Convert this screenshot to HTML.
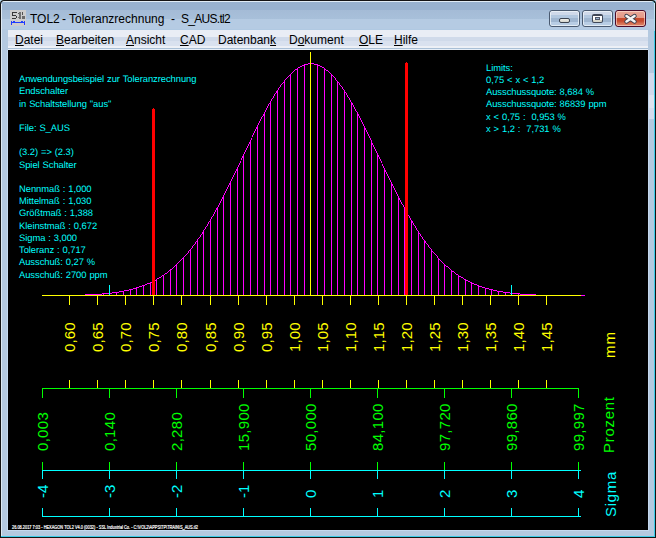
<!DOCTYPE html>
<html><head><meta charset="utf-8"><style>
html,body{margin:0;padding:0;width:656px;height:538px;overflow:hidden;background:#b8dcef}
body{position:relative;font-family:"Liberation Sans",sans-serif}
#outer{position:absolute;left:0;top:0;width:656px;height:538px;background:#141414;border-radius:4px 4px 0 0}
#frame{position:absolute;left:1px;top:1px;width:653px;height:535px;background:#b4c9e0;border-right:1px solid #3ccbe8;border-bottom:1px solid #3ccbe8;border-radius:4px 4px 0 0}
#title{position:absolute;left:1px;top:1px;width:653px;height:29px;
 background:linear-gradient(#e0ecf5 0,#e0ecf5 1px,#98b2cf 1px,#98b2cf 9px,#a4bbd6 9px,#a8c0da 18px,#b5cbe3 18px,#b5cbe3 28px,#b0c9e2 28px);
 border-radius:4px 4px 0 0}
#lhl{position:absolute;left:1px;top:4px;width:1px;height:532px;background:#dde9f4}
#rrefl{position:absolute;left:648px;top:73px;width:6px;height:46px;background:linear-gradient(#d0d9ec 0,#d0d9ec 22px,#dde3f0 22px,#dde3f0 35px,#d3dbed 35px)}
.tt{position:absolute;top:12px;font-size:12px;line-height:14px;color:#000;white-space:pre}
#menu{position:absolute;left:8px;top:30px;width:640px;height:20px;
 background:linear-gradient(#e9edf5 0,#e9edf5 7px,#d0daea 7px,#d0daea 11px,#d9e1ef 11px,#d9e1ef 16px,#edf0f6 16px,#edf0f6 18px,#a9bfd6 18px,#a9bfd6 19px,#e6eef8 19px)}
.mi{position:absolute;top:3px;font-size:12px;line-height:14px;color:#000;white-space:pre}
.mi u{text-decoration:underline;text-underline-offset:1px}
#cborder{position:absolute;left:7px;top:50px;width:642px;height:481px;background:#c4d8ee}
#canvas{position:absolute;left:8px;top:50px;width:640px;height:480px;background:#000;overflow:hidden}
.r{position:absolute;white-space:nowrap;transform-origin:0 0;transform:rotate(-90deg);line-height:15px;height:15px}
.t{position:absolute;white-space:pre;color:#00ffff;font-size:9.4px;line-height:12px;letter-spacing:-0.05px;word-spacing:0.4px;text-rendering:geometricPrecision}
.ft{position:absolute;left:4px;top:474px;font-size:5px;line-height:6px;color:#ffffff;-webkit-text-stroke:0.2px #fff;white-space:pre;transform-origin:0 0;transform:scaleX(0.78)}
.btn{position:absolute;top:10px;height:17px;width:31px;box-sizing:border-box;border:1px solid #4a5a70;border-radius:3px;overflow:hidden}
.btn i{position:absolute;left:0;top:0;right:0;bottom:0;border:1px solid rgba(240,245,250,.75);border-radius:2px}
</style></head><body>
<div id="outer"></div>
<div id="frame"></div>
<div id="title"></div>
<div id="lhl"></div>
<div id="rrefl"></div>
<div style="position:absolute;left:654px;top:3px;width:1px;height:28px;background:linear-gradient(#c8e8f6,#9cd8f0)"></div>
<svg width="16" height="16" viewBox="0 0 16 16" style="position:absolute;left:10px;top:10px" shape-rendering="crispEdges">
<rect width="16" height="16" fill="#cdcdcd"/>
<path d="M2 2h5v1h-4v2h3v1h-4zM6 6h1v2h-1zM2 8h4v1h-4z" fill="#383838"/>
<rect x="7.5" y="3" width="1" height="1" fill="#555"/><rect x="7.5" y="7" width="1" height="1" fill="#777"/>
<rect x="9" y="2" width="2" height="7" fill="#707070"/><rect x="12" y="2" width="1" height="3" fill="#505050"/><rect x="12" y="6" width="3" height="3" fill="#6a6a6a"/>
<rect x="1" y="11" width="1" height="4" fill="#1f3cff"/><rect x="14" y="11" width="1" height="4" fill="#1f3cff"/>
<rect x="1" y="12" width="14" height="1" fill="#1f3cff"/>
<rect x="3" y="11" width="2" height="2" fill="#1f3cff"/><rect x="11" y="11" width="2" height="2" fill="#1f3cff"/>
</svg>
<div class="tt" style="left:30px">TOL2</div><div class="tt" style="left:62px">-</div><div class="tt" style="left:69px">Toleranzrechnung</div><div class="tt" style="left:171px">-</div><div class="tt" style="left:181px;letter-spacing:-0.7px">S_AUS.tl2</div>
<div class="btn" style="left:549px;background:linear-gradient(#cfd9e9 0,#cfd9e9 4px,#b3c8df 4px,#b3c8df 7px,#9fb6d0 7px,#9fb6d0 11px,#b8cde4 11px)"><i></i>
 <div style="position:absolute;left:9px;top:7px;width:11px;height:5px;box-sizing:border-box;border:1px solid #3c4450;border-radius:2px;background:linear-gradient(#f0f0ea,#d4d4cc)"></div></div>
<div class="btn" style="left:582px;background:linear-gradient(#cfd9e9 0,#cfd9e9 4px,#b3c8df 4px,#b3c8df 7px,#9fb6d0 7px,#9fb6d0 11px,#b8cde4 11px)"><i></i>
 <div style="position:absolute;left:9px;top:3px;width:11px;height:9px;box-sizing:border-box;border:1px solid #404858;border-top-width:2px;border-radius:2px;background:linear-gradient(#fff 65%,#d8d8cc 65%)"></div>
 <div style="position:absolute;left:12px;top:6px;width:5px;height:3px;box-sizing:border-box;border:1px solid #50586a;background:#9ab4d0"></div></div>
<div class="btn" style="left:615px;border-color:#4a0a28;background:linear-gradient(#eaa898 0,#e49886 7px,#c84a2c 7px,#c54a2e 10px,#d9795c 13px)"><i style="border-color:rgba(255,230,220,.6)"></i>
 <svg width="31" height="17" viewBox="0 0 31 17" style="position:absolute;left:-1px;top:-1px">
 <path d="M11.5 6 L19.5 11.5 M19.5 6 L11.5 11.5" stroke="#3a3f4e" stroke-width="4.4" stroke-linecap="round"/>
 <path d="M11.5 6 L19.5 11.5 M19.5 6 L11.5 11.5" stroke="#f4f4f4" stroke-width="2.6" stroke-linecap="round"/>
 </svg></div>
<div id="menu">
<div class="mi" style="left:7px"><u>D</u>atei</div>
<div class="mi" style="left:48px"><u>B</u>earbeiten</div>
<div class="mi" style="left:118px"><u>A</u>nsicht</div>
<div class="mi" style="left:172px"><u>C</u>AD</div>
<div class="mi" style="left:210px">Datenban<u>k</u></div>
<div class="mi" style="left:281px">D<u>o</u>kument</div>
<div class="mi" style="left:351px"><u>O</u>LE</div>
<div class="mi" style="left:386px"><u>H</u>ilfe</div>
</div>
<div id="cborder"></div>
<div id="canvas">
<svg width="640" height="480" viewBox="8 50 640 480" style="position:absolute;left:0;top:0" shape-rendering="crispEdges"><path d="M42 295h1v1h-1zM43 295h1v1h-1zM44 295h1v1h-1zM45 295h1v1h-1zM46 295h1v1h-1zM47 295h1v1h-1zM48 295h1v1h-1zM49 295h1v1h-1zM50 295h1v1h-1zM51 295h1v1h-1zM52 295h1v1h-1zM53 295h1v1h-1zM54 295h1v1h-1zM55 295h1v1h-1zM56 295h1v1h-1zM57 295h1v1h-1zM58 295h1v1h-1zM59 295h1v1h-1zM60 295h1v1h-1zM61 295h1v1h-1zM62 295h1v1h-1zM63 295h1v1h-1zM64 295h1v1h-1zM65 295h1v1h-1zM66 295h1v1h-1zM67 295h1v1h-1zM68 295h1v1h-1zM69 295h1v1h-1zM70 295h1v1h-1zM71 295h1v1h-1zM72 295h1v1h-1zM73 295h1v1h-1zM74 295h1v1h-1zM75 295h1v1h-1zM76 295h1v1h-1zM77 295h1v1h-1zM78 295h1v1h-1zM79 295h1v1h-1zM80 295h1v1h-1zM81 295h1v1h-1zM82 295h1v1h-1zM83 295h1v1h-1zM84 295h1v1h-1zM85 294h1v1h-1zM86 294h1v1h-1zM87 294h1v1h-1zM88 294h1v1h-1zM89 294h1v1h-1zM90 294h1v1h-1zM91 294h1v1h-1zM92 294h1v1h-1zM93 294h1v1h-1zM94 294h1v1h-1zM95 294h1v1h-1zM96 294h1v1h-1zM97 294h1v1h-1zM98 294h1v1h-1zM99 294h1v1h-1zM100 294h1v1h-1zM101 294h1v1h-1zM102 293h1v1h-1zM103 293h1v1h-1zM104 293h1v1h-1zM105 293h1v1h-1zM106 293h1v1h-1zM107 293h1v1h-1zM108 293h1v1h-1zM109 293h1v1h-1zM110 293h1v1h-1zM111 293h1v1h-1zM112 292h1v1h-1zM113 292h1v1h-1zM114 292h1v1h-1zM115 292h1v1h-1zM116 292h1v1h-1zM117 292h1v1h-1zM118 292h1v1h-1zM119 291h1v1h-1zM120 291h1v1h-1zM121 291h1v1h-1zM122 291h1v1h-1zM123 291h1v1h-1zM124 290h1v1h-1zM125 290h1v1h-1zM126 290h1v1h-1zM127 290h1v1h-1zM128 290h1v1h-1zM129 289h1v1h-1zM130 289h1v1h-1zM131 289h1v1h-1zM132 289h1v1h-1zM133 288h1v1h-1zM134 288h1v1h-1zM135 288h1v1h-1zM136 287h1v1h-1zM137 287h1v1h-1zM138 287h1v1h-1zM139 286h1v1h-1zM140 286h1v1h-1zM141 286h1v1h-1zM142 285h1v1h-1zM143 285h1v1h-1zM144 285h1v1h-1zM145 284h1v1h-1zM146 284h1v1h-1zM147 283h1v1h-1zM148 283h1v1h-1zM149 283h1v1h-1zM150 282h1v1h-1zM151 282h1v1h-1zM152 281h1v1h-1zM153 281h1v1h-1zM154 280h1v1h-1zM155 280h1v1h-1zM156 279h1v1h-1zM157 278h1v1h-1zM158 278h1v1h-1zM159 277h1v1h-1zM160 277h1v1h-1zM161 276h1v1h-1zM162 275h1v1h-1zM163 275h1v1h-1zM164 274h1v1h-1zM165 273h1v1h-1zM166 273h1v1h-1zM167 272h1v1h-1zM168 271h1v1h-1zM169 270h1v1h-1zM170 269h1v1h-1zM171 269h1v1h-1zM172 268h1v1h-1zM173 267h1v1h-1zM174 266h1v1h-1zM175 265h1v1h-1zM176 264h1v1h-1zM177 263h1v1h-1zM178 262h1v1h-1zM179 261h1v1h-1zM180 260h1v1h-1zM181 259h1v1h-1zM182 258h1v1h-1zM183 257h1v1h-1zM184 256h1v1h-1zM185 255h1v1h-1zM186 254h1v1h-1zM187 253h1v1h-1zM188 251h1v2h-1zM189 250h1v1h-1zM190 249h1v1h-1zM191 248h1v1h-1zM192 246h1v2h-1zM193 245h1v1h-1zM194 244h1v1h-1zM195 242h1v2h-1zM196 241h1v1h-1zM197 239h1v2h-1zM198 238h1v1h-1zM199 237h1v1h-1zM200 235h1v2h-1zM201 234h1v1h-1zM202 232h1v2h-1zM203 230h1v2h-1zM204 229h1v1h-1zM205 227h1v2h-1zM206 226h1v1h-1zM207 224h1v2h-1zM208 222h1v2h-1zM209 221h1v1h-1zM210 219h1v2h-1zM211 217h1v2h-1zM212 216h1v1h-1zM213 214h1v2h-1zM214 212h1v2h-1zM215 210h1v2h-1zM216 208h1v2h-1zM217 207h1v1h-1zM218 205h1v2h-1zM219 203h1v2h-1zM220 201h1v2h-1zM221 199h1v2h-1zM222 197h1v2h-1zM223 195h1v2h-1zM224 193h1v2h-1zM225 191h1v2h-1zM226 189h1v2h-1zM227 187h1v2h-1zM228 185h1v2h-1zM229 183h1v2h-1zM230 181h1v2h-1zM231 179h1v2h-1zM232 177h1v2h-1zM233 175h1v2h-1zM234 173h1v2h-1zM235 171h1v2h-1zM236 169h1v2h-1zM237 167h1v2h-1zM238 165h1v2h-1zM239 163h1v2h-1zM240 161h1v2h-1zM241 158h1v2h-1zM242 156h1v2h-1zM243 154h1v2h-1zM244 152h1v2h-1zM245 150h1v2h-1zM246 148h1v2h-1zM247 146h1v2h-1zM248 144h1v2h-1zM249 142h1v2h-1zM250 140h1v2h-1zM251 138h1v2h-1zM252 135h1v2h-1zM253 133h1v2h-1zM254 131h1v2h-1zM255 129h1v2h-1zM256 127h1v2h-1zM257 125h1v2h-1zM258 123h1v2h-1zM259 121h1v2h-1zM260 119h1v2h-1zM261 117h1v2h-1zM262 116h1v1h-1zM263 114h1v2h-1zM264 112h1v2h-1zM265 110h1v2h-1zM266 108h1v2h-1zM267 106h1v2h-1zM268 104h1v2h-1zM269 103h1v1h-1zM270 101h1v2h-1zM271 99h1v2h-1zM272 98h1v1h-1zM273 96h1v2h-1zM274 94h1v2h-1zM275 93h1v1h-1zM276 91h1v2h-1zM277 90h1v1h-1zM278 88h1v2h-1zM279 87h1v1h-1zM280 85h1v2h-1zM281 84h1v1h-1zM282 83h1v1h-1zM283 82h1v1h-1zM284 80h1v2h-1zM285 79h1v1h-1zM286 78h1v1h-1zM287 77h1v1h-1zM288 76h1v1h-1zM289 75h1v1h-1zM290 74h1v1h-1zM291 73h1v1h-1zM292 72h1v1h-1zM293 71h1v1h-1zM294 70h1v1h-1zM295 69h1v1h-1zM296 69h1v1h-1zM297 68h1v1h-1zM298 67h1v1h-1zM299 67h1v1h-1zM300 66h1v1h-1zM301 66h1v1h-1zM302 65h1v1h-1zM303 65h1v1h-1zM304 64h1v1h-1zM305 64h1v1h-1zM306 64h1v1h-1zM307 64h1v1h-1zM308 63h1v1h-1zM309 63h1v1h-1zM310 63h1v1h-1zM311 63h1v1h-1zM312 63h1v1h-1zM313 63h1v1h-1zM314 64h1v1h-1zM315 64h1v1h-1zM316 64h1v1h-1zM317 64h1v1h-1zM318 65h1v1h-1zM319 65h1v1h-1zM320 66h1v1h-1zM321 66h1v1h-1zM322 67h1v1h-1zM323 67h1v1h-1zM324 68h1v1h-1zM325 69h1v1h-1zM326 70h1v1h-1zM327 70h1v1h-1zM328 71h1v1h-1zM329 72h1v1h-1zM330 73h1v1h-1zM331 74h1v1h-1zM332 75h1v1h-1zM333 76h1v1h-1zM334 77h1v1h-1zM335 78h1v2h-1zM336 80h1v1h-1zM337 81h1v1h-1zM338 82h1v1h-1zM339 83h1v2h-1zM340 85h1v1h-1zM341 86h1v1h-1zM342 87h1v2h-1zM343 89h1v1h-1zM344 90h1v2h-1zM345 92h1v1h-1zM346 93h1v2h-1zM347 95h1v2h-1zM348 97h1v1h-1zM349 98h1v2h-1zM350 100h1v2h-1zM351 102h1v1h-1zM352 103h1v2h-1zM353 105h1v2h-1zM354 107h1v2h-1zM355 109h1v2h-1zM356 111h1v1h-1zM357 112h1v2h-1zM358 114h1v2h-1zM359 116h1v2h-1zM360 118h1v2h-1zM361 120h1v2h-1zM362 122h1v2h-1zM363 124h1v2h-1zM364 126h1v2h-1zM365 128h1v2h-1zM366 130h1v2h-1zM367 132h1v2h-1zM368 134h1v2h-1zM369 136h1v2h-1zM370 138h1v2h-1zM371 140h1v2h-1zM372 143h1v2h-1zM373 145h1v2h-1zM374 147h1v2h-1zM375 149h1v2h-1zM376 151h1v2h-1zM377 153h1v2h-1zM378 155h1v2h-1zM379 157h1v2h-1zM380 159h1v2h-1zM381 161h1v2h-1zM382 164h1v2h-1zM383 166h1v2h-1zM384 168h1v2h-1zM385 170h1v2h-1zM386 172h1v2h-1zM387 174h1v2h-1zM388 176h1v2h-1zM389 178h1v2h-1zM390 180h1v2h-1zM391 182h1v2h-1zM392 184h1v2h-1zM393 186h1v2h-1zM394 188h1v2h-1zM395 190h1v2h-1zM396 192h1v2h-1zM397 194h1v2h-1zM398 196h1v2h-1zM399 198h1v2h-1zM400 200h1v2h-1zM401 202h1v2h-1zM402 204h1v1h-1zM403 205h1v2h-1zM404 207h1v2h-1zM405 209h1v2h-1zM406 211h1v2h-1zM407 213h1v2h-1zM408 215h1v1h-1zM409 216h1v2h-1zM410 218h1v2h-1zM411 220h1v1h-1zM412 221h1v2h-1zM413 223h1v2h-1zM414 225h1v1h-1zM415 226h1v2h-1zM416 228h1v2h-1zM417 230h1v1h-1zM418 231h1v2h-1zM419 233h1v1h-1zM420 234h1v2h-1zM421 236h1v1h-1zM422 237h1v2h-1zM423 239h1v1h-1zM424 240h1v1h-1zM425 241h1v2h-1zM426 243h1v1h-1zM427 244h1v1h-1zM428 245h1v2h-1zM429 247h1v1h-1zM430 248h1v1h-1zM431 249h1v2h-1zM432 251h1v1h-1zM433 252h1v1h-1zM434 253h1v1h-1zM435 254h1v1h-1zM436 255h1v1h-1zM437 256h1v2h-1zM438 258h1v1h-1zM439 259h1v1h-1zM440 260h1v1h-1zM441 261h1v1h-1zM442 262h1v1h-1zM443 263h1v1h-1zM444 264h1v1h-1zM445 265h1v1h-1zM446 266h1v1h-1zM447 266h1v1h-1zM448 267h1v1h-1zM449 268h1v1h-1zM450 269h1v1h-1zM451 270h1v1h-1zM452 271h1v1h-1zM453 271h1v1h-1zM454 272h1v1h-1zM455 273h1v1h-1zM456 274h1v1h-1zM457 274h1v1h-1zM458 275h1v1h-1zM459 276h1v1h-1zM460 276h1v1h-1zM461 277h1v1h-1zM462 277h1v1h-1zM463 278h1v1h-1zM464 279h1v1h-1zM465 279h1v1h-1zM466 280h1v1h-1zM467 280h1v1h-1zM468 281h1v1h-1zM469 281h1v1h-1zM470 282h1v1h-1zM471 282h1v1h-1zM472 283h1v1h-1zM473 283h1v1h-1zM474 284h1v1h-1zM475 284h1v1h-1zM476 284h1v1h-1zM477 285h1v1h-1zM478 285h1v1h-1zM479 286h1v1h-1zM480 286h1v1h-1zM481 286h1v1h-1zM482 287h1v1h-1zM483 287h1v1h-1zM484 287h1v1h-1zM485 288h1v1h-1zM486 288h1v1h-1zM487 288h1v1h-1zM488 288h1v1h-1zM489 289h1v1h-1zM490 289h1v1h-1zM491 289h1v1h-1zM492 289h1v1h-1zM493 290h1v1h-1zM494 290h1v1h-1zM495 290h1v1h-1zM496 290h1v1h-1zM497 291h1v1h-1zM498 291h1v1h-1zM499 291h1v1h-1zM500 291h1v1h-1zM501 291h1v1h-1zM502 291h1v1h-1zM503 292h1v1h-1zM504 292h1v1h-1zM505 292h1v1h-1zM506 292h1v1h-1zM507 292h1v1h-1zM508 292h1v1h-1zM509 292h1v1h-1zM510 293h1v1h-1zM511 293h1v1h-1zM512 293h1v1h-1zM513 293h1v1h-1zM514 293h1v1h-1zM515 293h1v1h-1zM516 293h1v1h-1zM517 293h1v1h-1zM518 293h1v1h-1zM519 293h1v1h-1zM520 294h1v1h-1zM521 294h1v1h-1zM522 294h1v1h-1zM523 294h1v1h-1zM524 294h1v1h-1zM525 294h1v1h-1zM526 294h1v1h-1zM527 294h1v1h-1zM528 294h1v1h-1zM529 294h1v1h-1zM530 294h1v1h-1zM531 294h1v1h-1zM532 294h1v1h-1zM533 294h1v1h-1zM534 294h1v1h-1zM535 294h1v1h-1zM536 295h1v1h-1zM537 295h1v1h-1zM538 295h1v1h-1zM539 295h1v1h-1zM540 295h1v1h-1zM541 295h1v1h-1zM542 295h1v1h-1zM543 295h1v1h-1zM544 295h1v1h-1zM545 295h1v1h-1zM546 295h1v1h-1zM547 295h1v1h-1zM548 295h1v1h-1zM549 295h1v1h-1zM550 295h1v1h-1zM551 295h1v1h-1zM552 295h1v1h-1zM553 295h1v1h-1zM554 295h1v1h-1zM555 295h1v1h-1zM556 295h1v1h-1zM557 295h1v1h-1zM558 295h1v1h-1zM559 295h1v1h-1zM560 295h1v1h-1zM561 295h1v1h-1zM562 295h1v1h-1zM563 295h1v1h-1zM564 295h1v1h-1zM565 295h1v1h-1zM566 295h1v1h-1zM567 295h1v1h-1zM568 295h1v1h-1zM569 295h1v1h-1zM570 295h1v1h-1zM571 295h1v1h-1zM572 295h1v1h-1zM573 295h1v1h-1zM574 295h1v1h-1zM575 295h1v1h-1zM576 295h1v1h-1zM577 295h1v1h-1zM578 295h1v1h-1zM579 295h1v1h-1zM580 295h1v1h-1zM581 295h1v1h-1zM582 295h1v1h-1zM583 295h1v1h-1zM584 295h1v1h-1z" fill="#ff00ff"/><path d="M89 294h1v1h-1zM96 294h1v1h-1zM103 293h1v2h-1zM109 293h1v2h-1zM116 292h1v3h-1zM123 291h1v4h-1zM130 289h1v6h-1zM136 287h1v8h-1zM143 285h1v10h-1zM150 282h1v13h-1zM156 279h1v16h-1zM163 275h1v20h-1zM170 269h1v26h-1zM176 264h1v31h-1zM183 257h1v38h-1zM190 249h1v46h-1zM197 240h1v55h-1zM203 231h1v64h-1zM210 220h1v75h-1zM217 207h1v88h-1zM223 196h1v99h-1zM230 182h1v113h-1zM237 168h1v127h-1zM243 155h1v140h-1zM250 141h1v154h-1zM257 126h1v169h-1zM264 113h1v182h-1zM270 102h1v193h-1zM277 90h1v205h-1zM284 81h1v214h-1zM290 74h1v221h-1zM297 68h1v227h-1zM304 64h1v231h-1zM310 63h1v232h-1zM317 64h1v231h-1zM324 68h1v227h-1zM331 74h1v221h-1zM337 81h1v214h-1zM344 91h1v204h-1zM351 102h1v193h-1zM357 113h1v182h-1zM364 127h1v168h-1zM371 141h1v154h-1zM377 154h1v141h-1zM384 169h1v126h-1zM391 183h1v112h-1zM398 197h1v98h-1zM404 208h1v87h-1zM411 220h1v75h-1zM418 232h1v63h-1zM424 240h1v55h-1zM431 250h1v45h-1zM438 258h1v37h-1zM444 264h1v31h-1zM451 270h1v25h-1zM458 275h1v20h-1zM465 279h1v16h-1zM471 282h1v13h-1zM478 285h1v10h-1zM485 288h1v7h-1zM491 289h1v6h-1zM498 291h1v4h-1zM505 292h1v3h-1zM511 293h1v2h-1zM518 293h1v2h-1zM525 294h1v1h-1zM532 294h1v1h-1z" fill="#ff00ff"/><rect x="42" y="295" width="539" height="1" fill="#ffff00"/><rect x="69" y="296" width="1" height="9" fill="#ffff00"/><rect x="97" y="296" width="1" height="9" fill="#ffff00"/><rect x="125" y="296" width="1" height="9" fill="#ffff00"/><rect x="153" y="296" width="1" height="9" fill="#ffff00"/><rect x="181" y="296" width="1" height="9" fill="#ffff00"/><rect x="210" y="296" width="1" height="9" fill="#ffff00"/><rect x="238" y="296" width="1" height="9" fill="#ffff00"/><rect x="266" y="296" width="1" height="9" fill="#ffff00"/><rect x="294" y="296" width="1" height="9" fill="#ffff00"/><rect x="322" y="296" width="1" height="9" fill="#ffff00"/><rect x="350" y="296" width="1" height="9" fill="#ffff00"/><rect x="378" y="296" width="1" height="9" fill="#ffff00"/><rect x="406" y="296" width="1" height="9" fill="#ffff00"/><rect x="434" y="296" width="1" height="9" fill="#ffff00"/><rect x="462" y="296" width="1" height="9" fill="#ffff00"/><rect x="490" y="296" width="1" height="9" fill="#ffff00"/><rect x="518" y="296" width="1" height="9" fill="#ffff00"/><rect x="546" y="296" width="1" height="9" fill="#ffff00"/><rect x="109" y="285" width="1" height="10" fill="#00ffff"/><rect x="511" y="285" width="1" height="10" fill="#00ffff"/><rect x="310" y="52" width="1" height="243" fill="#ffff00"/><rect x="152" y="109" width="3" height="186" fill="#ff0000"/><rect x="153" y="108" width="1" height="1" fill="#ff0000"/><rect x="405" y="63" width="3" height="232" fill="#ff0000"/><rect x="406" y="62" width="1" height="1" fill="#ff0000"/><rect x="42" y="388" width="537" height="1" fill="#00ff00"/><rect x="42" y="389" width="1" height="9" fill="#00ff00"/><rect x="109" y="389" width="1" height="9" fill="#00ff00"/><rect x="176" y="389" width="1" height="9" fill="#00ff00"/><rect x="243" y="389" width="1" height="9" fill="#00ff00"/><rect x="310" y="389" width="1" height="9" fill="#00ff00"/><rect x="377" y="389" width="1" height="9" fill="#00ff00"/><rect x="444" y="389" width="1" height="9" fill="#00ff00"/><rect x="511" y="389" width="1" height="9" fill="#00ff00"/><rect x="578" y="389" width="1" height="9" fill="#00ff00"/><rect x="69" y="380" width="1" height="8" fill="#ffff00"/><rect x="97" y="380" width="1" height="8" fill="#ffff00"/><rect x="125" y="380" width="1" height="8" fill="#ffff00"/><rect x="153" y="380" width="1" height="8" fill="#ffff00"/><rect x="181" y="380" width="1" height="8" fill="#ffff00"/><rect x="210" y="380" width="1" height="8" fill="#ffff00"/><rect x="238" y="380" width="1" height="8" fill="#ffff00"/><rect x="266" y="380" width="1" height="8" fill="#ffff00"/><rect x="294" y="380" width="1" height="8" fill="#ffff00"/><rect x="322" y="380" width="1" height="8" fill="#ffff00"/><rect x="350" y="380" width="1" height="8" fill="#ffff00"/><rect x="378" y="380" width="1" height="8" fill="#ffff00"/><rect x="406" y="380" width="1" height="8" fill="#ffff00"/><rect x="434" y="380" width="1" height="8" fill="#ffff00"/><rect x="462" y="380" width="1" height="8" fill="#ffff00"/><rect x="490" y="380" width="1" height="8" fill="#ffff00"/><rect x="518" y="380" width="1" height="8" fill="#ffff00"/><rect x="546" y="380" width="1" height="8" fill="#ffff00"/><rect x="42" y="470" width="539" height="1" fill="#00ffff"/><rect x="42" y="462" width="1" height="8" fill="#00ff00"/><rect x="42" y="471" width="1" height="8" fill="#00ffff"/><rect x="42" y="508" width="1" height="8" fill="#00ffff"/><rect x="109" y="462" width="1" height="8" fill="#00ff00"/><rect x="109" y="471" width="1" height="8" fill="#00ffff"/><rect x="109" y="508" width="1" height="8" fill="#00ffff"/><rect x="176" y="462" width="1" height="8" fill="#00ff00"/><rect x="176" y="471" width="1" height="8" fill="#00ffff"/><rect x="176" y="508" width="1" height="8" fill="#00ffff"/><rect x="243" y="462" width="1" height="8" fill="#00ff00"/><rect x="243" y="471" width="1" height="8" fill="#00ffff"/><rect x="243" y="508" width="1" height="8" fill="#00ffff"/><rect x="310" y="462" width="1" height="8" fill="#00ff00"/><rect x="310" y="471" width="1" height="8" fill="#00ffff"/><rect x="310" y="508" width="1" height="8" fill="#00ffff"/><rect x="377" y="462" width="1" height="8" fill="#00ff00"/><rect x="377" y="471" width="1" height="8" fill="#00ffff"/><rect x="377" y="508" width="1" height="8" fill="#00ffff"/><rect x="444" y="462" width="1" height="8" fill="#00ff00"/><rect x="444" y="471" width="1" height="8" fill="#00ffff"/><rect x="444" y="508" width="1" height="8" fill="#00ffff"/><rect x="511" y="462" width="1" height="8" fill="#00ff00"/><rect x="511" y="471" width="1" height="8" fill="#00ffff"/><rect x="511" y="508" width="1" height="8" fill="#00ffff"/><rect x="578" y="462" width="1" height="8" fill="#00ff00"/><rect x="578" y="471" width="1" height="8" fill="#00ffff"/><rect x="578" y="508" width="1" height="8" fill="#00ffff"/><rect x="42" y="516" width="539" height="1" fill="#00ffff"/></svg>
<div class="r" style="left:54px;top:302px;color:#ffff00;font-size:15px;letter-spacing:0.15px">0,60</div><div class="r" style="left:82px;top:302px;color:#ffff00;font-size:15px;letter-spacing:0.15px">0,65</div><div class="r" style="left:110px;top:302px;color:#ffff00;font-size:15px;letter-spacing:0.15px">0,70</div><div class="r" style="left:138px;top:302px;color:#ffff00;font-size:15px;letter-spacing:0.15px">0,75</div><div class="r" style="left:166px;top:302px;color:#ffff00;font-size:15px;letter-spacing:0.15px">0,80</div><div class="r" style="left:195px;top:302px;color:#ffff00;font-size:15px;letter-spacing:0.15px">0,85</div><div class="r" style="left:223px;top:302px;color:#ffff00;font-size:15px;letter-spacing:0.15px">0,90</div><div class="r" style="left:251px;top:302px;color:#ffff00;font-size:15px;letter-spacing:0.15px">0,95</div><div class="r" style="left:279px;top:302px;color:#ffff00;font-size:15px;letter-spacing:0.15px">1,00</div><div class="r" style="left:307px;top:302px;color:#ffff00;font-size:15px;letter-spacing:0.15px">1,05</div><div class="r" style="left:335px;top:302px;color:#ffff00;font-size:15px;letter-spacing:0.15px">1,10</div><div class="r" style="left:363px;top:302px;color:#ffff00;font-size:15px;letter-spacing:0.15px">1,15</div><div class="r" style="left:391px;top:302px;color:#ffff00;font-size:15px;letter-spacing:0.15px">1,20</div><div class="r" style="left:419px;top:302px;color:#ffff00;font-size:15px;letter-spacing:0.15px">1,25</div><div class="r" style="left:447px;top:302px;color:#ffff00;font-size:15px;letter-spacing:0.15px">1,30</div><div class="r" style="left:475px;top:302px;color:#ffff00;font-size:15px;letter-spacing:0.15px">1,35</div><div class="r" style="left:503px;top:302px;color:#ffff00;font-size:15px;letter-spacing:0.15px">1,40</div><div class="r" style="left:531px;top:302px;color:#ffff00;font-size:15px;letter-spacing:0.15px">1,45</div><div class="r" style="left:594px;top:308px;color:#ffff00;font-size:15px;letter-spacing:0.9px">mm</div><div class="r" style="left:27px;top:401px;color:#00ff00;font-size:15px;letter-spacing:0.3px">0,003</div><div class="r" style="left:94px;top:401px;color:#00ff00;font-size:15px;letter-spacing:0.3px">0,140</div><div class="r" style="left:161px;top:401px;color:#00ff00;font-size:15px;letter-spacing:0.3px">2,280</div><div class="r" style="left:228px;top:401px;color:#00ff00;font-size:15px;letter-spacing:0.3px">15,900</div><div class="r" style="left:295px;top:401px;color:#00ff00;font-size:15px;letter-spacing:0.3px">50,000</div><div class="r" style="left:362px;top:401px;color:#00ff00;font-size:15px;letter-spacing:0.3px">84,100</div><div class="r" style="left:429px;top:401px;color:#00ff00;font-size:15px;letter-spacing:0.3px">97,720</div><div class="r" style="left:496px;top:401px;color:#00ff00;font-size:15px;letter-spacing:0.3px">99,860</div><div class="r" style="left:563px;top:401px;color:#00ff00;font-size:15px;letter-spacing:0.3px">99,997</div><div class="r" style="left:593px;top:403px;color:#00ff00;font-size:15px;letter-spacing:0.7px">Prozent</div><div class="r" style="left:27px;top:448px;color:#00ffff;font-size:15px;letter-spacing:0px">-4</div><div class="r" style="left:94px;top:448px;color:#00ffff;font-size:15px;letter-spacing:0px">-3</div><div class="r" style="left:161px;top:448px;color:#00ffff;font-size:15px;letter-spacing:0px">-2</div><div class="r" style="left:228px;top:448px;color:#00ffff;font-size:15px;letter-spacing:0px">-1</div><div class="r" style="left:295px;top:448px;color:#00ffff;font-size:15px;letter-spacing:0px">0</div><div class="r" style="left:362px;top:448px;color:#00ffff;font-size:15px;letter-spacing:0px">1</div><div class="r" style="left:429px;top:448px;color:#00ffff;font-size:15px;letter-spacing:0px">2</div><div class="r" style="left:496px;top:448px;color:#00ffff;font-size:15px;letter-spacing:0px">3</div><div class="r" style="left:563px;top:448px;color:#00ffff;font-size:15px;letter-spacing:0px">4</div><div class="r" style="left:595px;top:467px;color:#00ffff;font-size:15px;letter-spacing:0.7px">Sigma</div><div class="t" style="left:11px;top:23px">Anwendungsbeispiel zur Toleranzrechnung</div><div class="t" style="left:11px;top:35px">Endschalter</div><div class="t" style="left:11px;top:48px">in Schaltstellung "aus"</div><div class="t" style="left:11px;top:72px">File: S_AUS</div><div class="t" style="left:11px;top:96px">(3.2) =&gt; (2.3)</div><div class="t" style="left:11px;top:109px">Spiel Schalter</div><div class="t" style="left:11px;top:133px">Nennmaß : 1,000</div><div class="t" style="left:11px;top:145px">Mittelmaß : 1,030</div><div class="t" style="left:11px;top:157px">Größtmaß : 1,388</div><div class="t" style="left:11px;top:170px">Kleinstmaß : 0,672</div><div class="t" style="left:11px;top:182px">Sigma : 3,000</div><div class="t" style="left:11px;top:194px">Toleranz : 0,717</div><div class="t" style="left:11px;top:206px">Ausschuß: 0,27 %</div><div class="t" style="left:11px;top:219px">Ausschuß: 2700 ppm</div><div class="t" style="left:478px;top:12px">Limits:</div><div class="t" style="left:478px;top:24px">0,75 &lt; x &lt; 1,2</div><div class="t" style="left:478px;top:36px">Ausschussquote: 8,684 %</div><div class="t" style="left:478px;top:48px">Ausschussquote: 86839 ppm</div><div class="t" style="left:478px;top:61px">x &lt; 0,75 :&nbsp; 0,953 %</div><div class="t" style="left:478px;top:73px">x &gt; 1,2 :&nbsp; 7,731 %</div><div class="ft">26.08.2017 7:03 - HEXAGON TOL2 V4.0 (0032) - SSL Industrial Co. - C:\VOL2\APPS\TP\TRAIN\S_AUS.tl2</div>
</div>
</body></html>
